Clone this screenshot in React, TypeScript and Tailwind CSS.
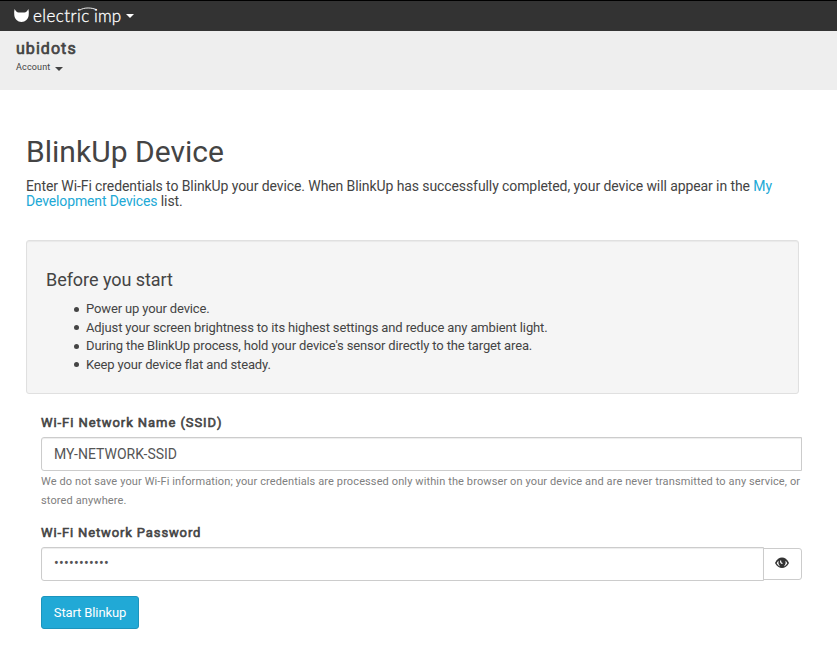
import React from "react";

const steps = [
  { text: "Power up your device.", tracking: "tracking-[-0.14px]" },
  {
    text: "Adjust your screen brightness to its highest settings and reduce any ambient light.",
    tracking: "tracking-[-0.132px]",
  },
  {
    text: "During the BlinkUp process, hold your device's sensor directly to the target area.",
    tracking: "tracking-[-0.134px]",
  },
  { text: "Keep your device flat and steady.", tracking: "tracking-[-0.14px]" },
];

function Caret({ className }: { className: string }) {
  return (
    <svg className={className} width="8" height="4" viewBox="0 0 8 4" fill="currentColor">
      <path d="M0 0h8L4 4z" />
    </svg>
  );
}

function Brand() {
  return (
    <div className="flex h-[31px] items-start border-t border-black bg-[#333] pl-[14px] text-white">
      <svg className="mt-[8px] shrink-0" width="15" height="14" viewBox="0 0 15 14" fill="currentColor">
        <path d="M0.6 0C1.500 2 3 3.300 4.600 3.500h5.800C12 3.300 13.500 2 14.400 0c.5 2 .6 4.100.3 6.300C14.200 10.200 11.400 13 7.500 13S.8 10.200.3 6.300C0 4.100.1 2 .6 0z" />
      </svg>
      <div className="relative ml-[4px] flex h-[30px] w-[89px] font-['Lato',sans-serif] text-[17px] font-light leading-[30px] [-webkit-text-stroke:0.3px]">
        <span className="w-[61px] tracking-[0.45px]">electric</span>
        <span className="tracking-[0.2px]">imp</span>
        <svg className="absolute left-[46px] top-[6px]" width="19" height="4" viewBox="0 0 19 4" fill="none" stroke="currentColor">
          <path d="M1 3C5 .3 13 .3 18 3" strokeWidth="0.9" />
        </svg>
      </div>
      <Caret className="ml-[4px] mt-[13px]" />
    </div>
  );
}

export default function App() {
  return (
    <div className="h-[657px] w-[837px] overflow-hidden bg-white font-['Roboto',sans-serif] text-[#444]">
      <Brand />
      <header className="h-[59px] bg-[#eee] pl-4 pt-[8px]">
        <div className="text-[16px] leading-[19px] tracking-[1.05px] [-webkit-text-stroke:0.7px]">ubidots</div>
        <div className="mt-[3px] flex items-center text-[9px] leading-[12px]">
          <span className="tracking-[0.15px]">Account</span>
          <Caret className="ml-[5px] mt-[4px]" />
        </div>
      </header>
      <main className="pl-[26px] pt-[44px]">
        <h1 className="text-[30px] leading-[36px] tracking-[0.02px]">BlinkUp Device</h1>
        <p className="mt-[9px] w-[773px] text-[14px] leading-[15px] tracking-[-0.093px]">
          Enter Wi-Fi credentials to BlinkUp your device. When BlinkUp has successfully completed, your device will appear in the{" "}
          <a className="text-[#21a9d6]">
            My
            <br />
            <span className="tracking-[-0.14px]">Development Devices</span>
          </a>{" "}
          list.
        </p>
        <section className="mt-[31px] h-[154px] w-[773px] rounded-[3px] border border-[#e0e0e0] bg-[#f5f5f5] pl-[19px] pt-[28px] shadow-[inset_0_1px_1px_rgba(0,0,0,0.05)]">
          <h2 className="text-[18px] leading-[22px] tracking-[-0.05px]">Before you start</h2>
          <ul className="mt-[9px] pl-[28px] text-[13px] leading-[18.57px]">
            {steps.map((s) => (
              <li key={s.text} className="flex items-center">
                <span className="mr-[7px] size-[5px] rounded-full bg-[#444]" />
                <span className={s.tracking}>{s.text}</span>
              </li>
            ))}
          </ul>
        </section>
        <form className="ml-[15px] mt-[19px] w-[761px]">
          <label className="block text-[13px] leading-[19px] tracking-[0.94px] [-webkit-text-stroke:0.6px]">Wi-Fi Network Name (SSID)</label>
          <div className="mt-[5px] h-[34px] rounded-l-[3px] border border-[#ccc] pl-[12px] text-[14px] leading-[32px] text-[#555] shadow-[inset_0_1px_1px_rgba(0,0,0,0.075)]">
            MY-NETWORK-SSID
          </div>
          <p className="mt-px text-[11px] leading-[19px] tracking-[0.115px] text-[#808080]">
            We do not save your Wi-Fi information; your credentials are processed only within the browser on your device and are never transmitted to any service, or
            <br />
            stored anywhere.
          </p>
          <label className="mt-[13px] block text-[13px] leading-[19px] tracking-[0.87px] [-webkit-text-stroke:0.6px]">Wi-Fi Network Password</label>
          <div className="mt-[5px] flex items-center">
            <div className="h-[34px] w-[723px] rounded-l-[3px] border border-[#ccc] pl-[12px] text-[14px] leading-[30px] tracking-[0.28px] text-[#555] shadow-[inset_0_1px_1px_rgba(0,0,0,0.075)]">
              •••••••••••
            </div>
            <button type="button" className="-ml-px flex h-[32px] w-[39px] items-center justify-center rounded-r-[3px] border border-[#ccc] pb-[3px] pr-px text-[#333]">
              <svg width="14" height="12" viewBox="0 0 14 12">
                <path d="M0 6C3.500-1.200 10.500-1.200 14 6 10.500 12.700 3.500 12.700 0 6z" fill="currentColor" />
                <path d="M1.700 6.200C2.200 5.200 2.800 4.400 3.600 3.800c-.6 2.200.1 4.400 1.700 5.600C3.800 8.900 2.500 7.800 1.700 6.200zM12.300 6.200C11.800 5.200 11.200 4.400 10.400 3.800c.6 2.200-.1 4.400-1.700 5.600C10.200 8.900 11.500 7.800 12.300 6.200z" fill="white" />
                <path d="M5.600 3.500c-.2 1.700.5 2.800 1.900 3" fill="none" stroke="white" strokeWidth="1.100" />
              </svg>
            </button>
          </div>
          <button type="button" className="mt-[15px] block h-[33px] w-[98px] rounded-[3px] border border-[#1c94bd] bg-[#21a9d6] text-[13px] leading-[31px] tracking-[-0.12px] text-white">
            Start Blinkup
          </button>
        </form>
      </main>
    </div>
  );
}
